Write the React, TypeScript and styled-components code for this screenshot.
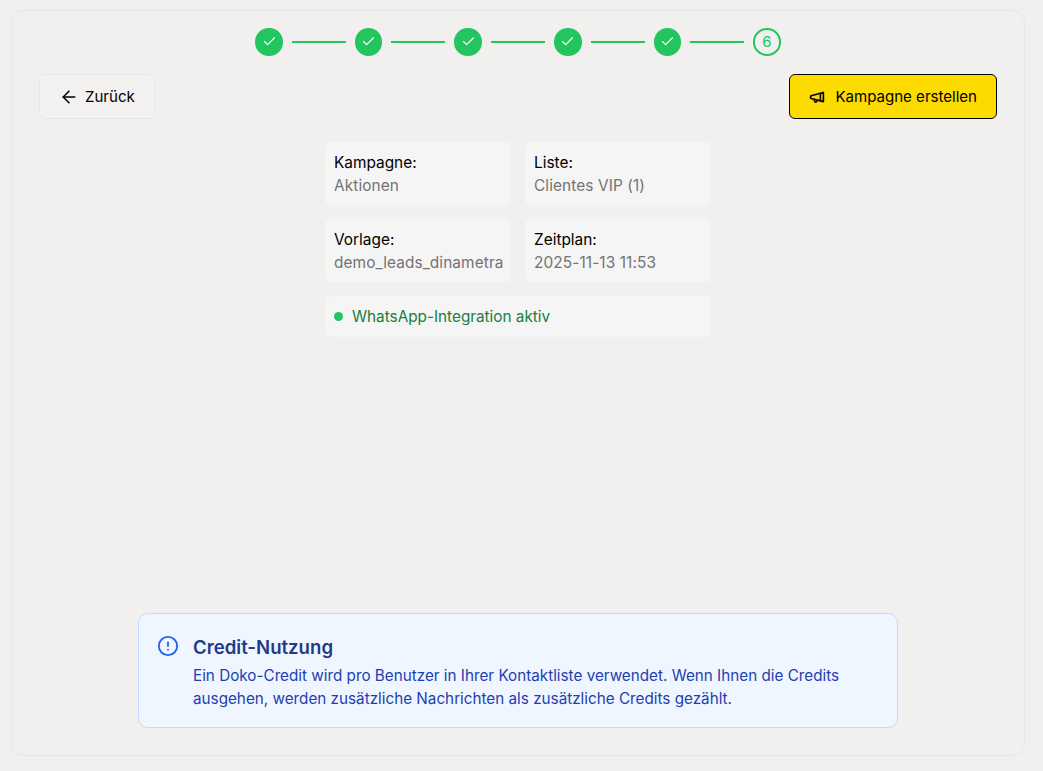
import React from 'react';
import styled, { createGlobalStyle } from 'styled-components';
import { ArrowLeft, Check, CircleAlert } from 'lucide-react';

const GlobalStyle = createGlobalStyle`
  html, body {
    margin: 0;
    padding: 0;
    height: 100%;
    background: #f1f0ee;
    font-family: Inter, "Liberation Sans", sans-serif;
  }
  #root {
    height: 100%;
  }
`;

const Page = styled.div`
  box-sizing: border-box;
  width: 1043px;
  height: 771px;
  padding: 10px 18px 15px 11px;
  display: flex;
`;

const Panel = styled.div`
  box-sizing: border-box;
  flex: 1;
  display: flex;
  flex-direction: column;
  padding: 17px 27px 27px;
  border: 1px solid #e8e7e5;
  border-radius: 12px;
`;

const Stepper = styled.div`
  display: flex;
  align-items: center;
  justify-content: center;
  gap: 9px;
  margin-bottom: 18.4px;
`;

const StepCircle = styled.div<{ $done?: boolean }>`
  box-sizing: border-box;
  width: 27.6px;
  height: 27.6px;
  border-radius: 50%;
  display: flex;
  align-items: center;
  justify-content: center;
  font-size: 15px;
  color: #22c55e;
  background: ${({ $done }) => ($done ? '#22c55e' : 'transparent')};
  border: ${({ $done }) => ($done ? 'none' : '2px solid #22c55e')};
`;

const StepLine = styled.div`
  width: 54px;
  height: 2px;
  background: #22c55e;
`;

const Toolbar = styled.div`
  display: flex;
  justify-content: space-between;
  margin-bottom: 23px;
`;

const Button = styled.button<{ $primary?: boolean }>`
  box-sizing: border-box;
  height: 45px;
  display: flex;
  align-items: center;
  gap: 6px;
  padding: 1px 19px 0;
  font: inherit;
  font-size: 15.05px;
  color: #000;
  border-radius: 6px;
  background: ${({ $primary }) => ($primary ? '#fcdc00' : '#f3f2f0')};
  border: 1px solid ${({ $primary }) => ($primary ? '#000' : '#e8e7e5')};
`;

const Summary = styled.div`
  align-self: center;
  width: 386px;
  display: grid;
  grid-template-columns: repeat(2, minmax(0, 1fr));
  gap: 14px;
`;

const Card = styled.div`
  box-sizing: border-box;
  height: 63px;
  padding: 9px;
  background: #f5f5f5;
  border-radius: 6px;
  font-size: 15.4px;
  line-height: 23px;
`;

const CardLabel = styled.div`
  color: #000;
`;

const CardValue = styled.div`
  color: #737373;
  white-space: nowrap;
  letter-spacing: 0.1px;
`;

const StatusCard = styled.div`
  grid-column: 1 / 3;
  height: 41px;
  box-sizing: border-box;
  padding: 0 9px;
  display: flex;
  align-items: center;
  gap: 9px;
  background: #f5f5f5;
  border-radius: 6px;
  font-size: 15.3px;
  color: #15803d;
`;

const StatusDot = styled.span`
  width: 9px;
  height: 9px;
  border-radius: 50%;
  background: #22c55e;
`;

const Notice = styled.div`
  box-sizing: border-box;
  margin-top: auto;
  align-self: center;
  width: 760px;
  height: 115px;
  padding: 21px 18px;
  display: flex;
  gap: 14px;
  background: #eff6ff;
  border: 1px solid #bfdbfe;
  border-radius: 10px;
`;

const NoticeBody = styled.div`
  flex: 1;
`;

const NoticeTitle = styled.div`
  font-size: 18.6px;
  font-weight: 600;
  line-height: 24px;
  color: #1e3a8a;
  margin-bottom: 5px;
`;

const NoticeText = styled.div`
  font-size: 15.25px;
  line-height: 23px;
  color: #1e40af;
`;

const MegaphoneIcon = () => (
  <svg width={20} height={20} viewBox="0 0 20 20" fill="none" stroke="currentColor" strokeWidth={1.6} strokeLinejoin="round" strokeLinecap="round">
    <path d="M3 8.6 14.4 5.4v9.2L3 11.8a1.6 1.6 0 0 1 0-3.2Z" />
    <path d="M11.4 6.4v7.4" />
    <path d="M5.4 12.4v1.4a1.3 1.3 0 0 0 2.6 0v-.7" />
  </svg>
);

export default function App() {
  return (
    <Page>
      <GlobalStyle />
      <Panel>
        <Stepper>
          {[1, 2, 3, 4, 5].map((step) => (
            <React.Fragment key={step}>
              <StepCircle $done>
                <Check size={15} color="#fff" strokeWidth={1.8} />
              </StepCircle>
              <StepLine />
            </React.Fragment>
          ))}
          <StepCircle>6</StepCircle>
        </Stepper>
        <Toolbar>
          <Button type="button">
            <ArrowLeft size={20} strokeWidth={1.8} />
            Zurück
          </Button>
          <Button type="button" $primary>
            <MegaphoneIcon />
            Kampagne erstellen
          </Button>
        </Toolbar>
        <Summary>
          <Card>
            <CardLabel>Kampagne:</CardLabel>
            <CardValue>Aktionen</CardValue>
          </Card>
          <Card>
            <CardLabel>Liste:</CardLabel>
            <CardValue>Clientes VIP (1)</CardValue>
          </Card>
          <Card>
            <CardLabel>Vorlage:</CardLabel>
            <CardValue>demo_leads_dinametra</CardValue>
          </Card>
          <Card>
            <CardLabel>Zeitplan:</CardLabel>
            <CardValue>2025-11-13 11:53</CardValue>
          </Card>
          <StatusCard>
            <StatusDot />
            WhatsApp-Integration aktiv
          </StatusCard>
        </Summary>
        <Notice>
          <CircleAlert size={22} color="#2563eb" strokeWidth={2} />
          <NoticeBody>
            <NoticeTitle>Credit-Nutzung</NoticeTitle>
            <NoticeText>
              Ein Doko-Credit wird pro Benutzer in Ihrer Kontaktliste verwendet. Wenn Ihnen die Credits
              ausgehen, werden zusätzliche Nachrichten als zusätzliche Credits gezählt.
            </NoticeText>
          </NoticeBody>
        </Notice>
      </Panel>
    </Page>
  );
}
